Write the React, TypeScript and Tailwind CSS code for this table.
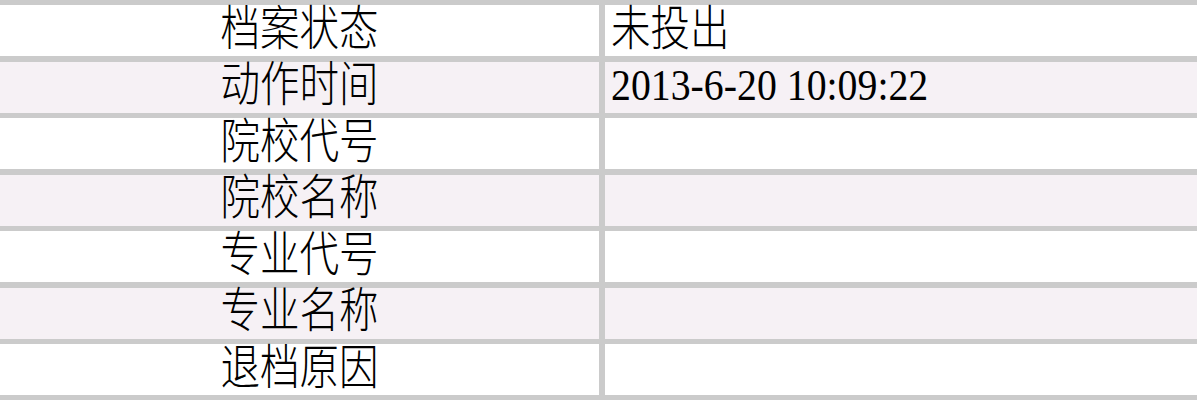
import React from "react";

const rows: [string, string][] = [
  ["档案状态", "未投出"],
  ["动作时间", "2013-6-20 10:09:22"],
  ["院校代号", ""],
  ["院校名称", ""],
  ["专业代号", ""],
  ["专业名称", ""],
  ["退档原因", ""],
];

const App = () => {
  return (
    <div className="w-[1197px] h-[400px] overflow-hidden bg-[#cbcbcb] pt-[5px]">
      <div className="grid grid-cols-[599px_1fr] auto-rows-[51px] gap-x-[6px] gap-y-[5.5px] text-black">
        {rows.map(([label, value], i) => {
          const bg = i % 2 === 1 ? "bg-[#f6f1f5]" : "bg-white";
          const isDate = /^\d/.test(value);
          return (
            <React.Fragment key={label}>
              <div
                className={`${bg} flex items-center justify-center text-[39.5px] leading-none font-light font-['Liberation_Serif','Noto_Sans_CJK_SC',serif]`}
              >
                <span className="inline-block scale-y-[1.2]">{label}</span>
              </div>
              <div
                className={`${bg} flex items-center pl-[6px] leading-none font-['Liberation_Serif','Noto_Sans_CJK_SC',serif] ${
                  isDate ? "text-[39.8px]" : "text-[39.5px] font-light"
                }`}
              >
                <span className={`inline-block ${isDate ? "scale-y-[1.1]" : "scale-y-[1.2]"}`}>{value}</span>
              </div>
            </React.Fragment>
          );
        })}
      </div>
    </div>
  );
};

export default App;
